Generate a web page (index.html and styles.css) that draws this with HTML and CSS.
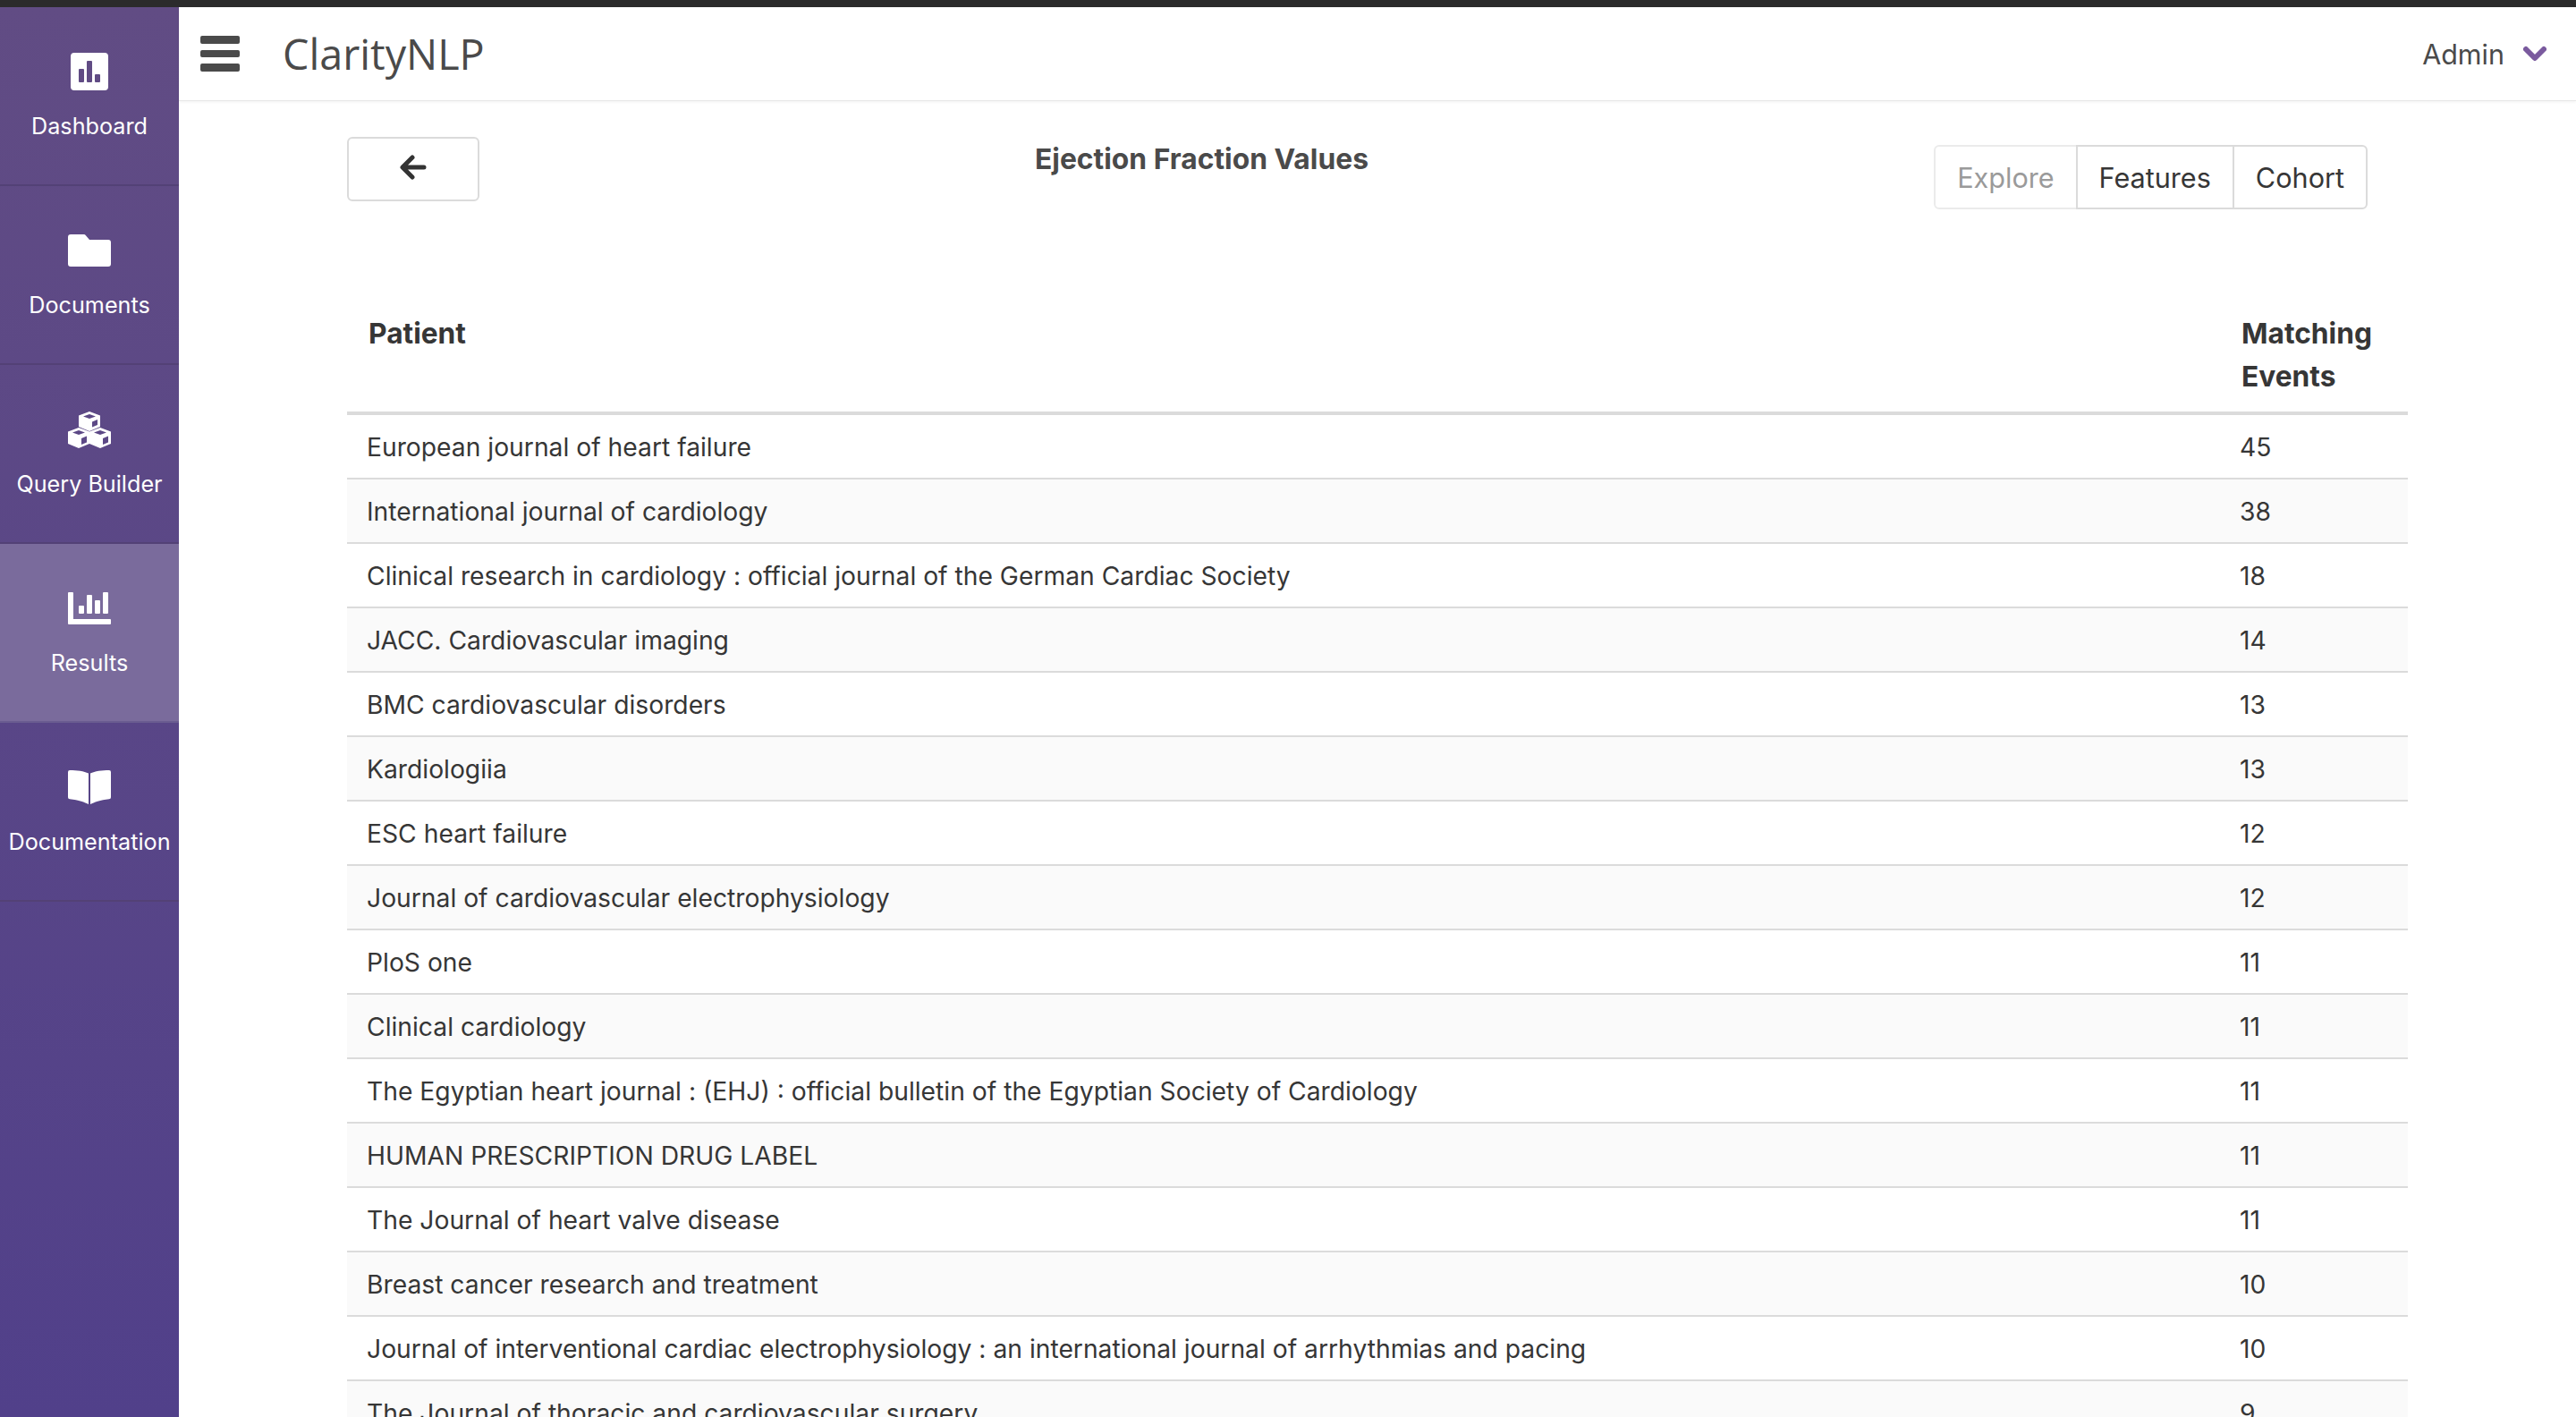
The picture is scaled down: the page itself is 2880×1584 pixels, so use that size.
FILE: index.html
```html
<!DOCTYPE html>
<html lang="en">
<head>
  <meta charset="UTF-8">
  <title>ClarityNLP</title>
  <link rel="stylesheet" href="styles.css">
</head>
<body>
  <div class="app">
    <!-- Sidebar -->
    <nav class="sidebar">
      <a class="nav-item">
        <div class="nav-icon">
          <svg width="42" height="42" viewBox="0 0 42 42"><path fill="#fff" fill-rule="evenodd" d="M4 0h34a4 4 0 0 1 4 4v34a4 4 0 0 1-4 4H4a4 4 0 0 1-4-4V4a4 4 0 0 1 4-4zM10 18a1 1 0 0 0-1 1v13a1 1 0 0 0 1 1h4a1 1 0 0 0 1-1V19a1 1 0 0 0-1-1zM19 9a1 1 0 0 0-1 1v22a1 1 0 0 0 1 1h4a1 1 0 0 0 1-1V10a1 1 0 0 0-1-1zM28 24a1 1 0 0 0-1 1v7a1 1 0 0 0 1 1h4a1 1 0 0 0 1-1v-7a1 1 0 0 0-1-1z"/></svg>
        </div>
        <span>Dashboard</span>
      </a>
      <a class="nav-item">
        <div class="nav-icon">
          <svg width="48" height="36" viewBox="0 0 48 36"><path fill="#fff" d="M3 0h15a2 2 0 0 1 1.500.7L24 6h21a3 3 0 0 1 3 3v24a3 3 0 0 1-3 3H3a3 3 0 0 1-3-3V3a3 3 0 0 1 3-3z"/></svg>
        </div>
        <span>Documents</span>
      </a>
      <a class="nav-item">
        <div class="nav-icon">
          <svg width="48" height="41" viewBox="0 0 48 41"><path fill="#fff" fill-rule="evenodd" d="M24 0l12 4.500V17l-12 5-12-5V4.500zM24 3L17 5.500l7 2.500 7-2.500zM27 11.500v6l6-2.500V9zM12 18L24 22.500V36l-12 5L0 36V22.500zM12 21L5 23.500l7 2.500 7-2.500zM15 30v7l6-2.500V27.500zM36 18l12 4.500V36l-12 5-12-5V22.500zM36 21l-7 2.500 7 2.500 7-2.500zM39 30v7l6-2.500V27.500z"/></svg>
        </div>
        <span>Query Builder</span>
      </a>
      <a class="nav-item active">
        <div class="nav-icon">
          <svg width="48" height="36" viewBox="0 0 48 36"><path fill="#fff" d="M1 0h4a1 1 0 0 1 1 1v29h41a1 1 0 0 1 1 1v4a1 1 0 0 1-1 1H1a1 1 0 0 1-1-1V1a1 1 0 0 1 1-1zM13 15h4a1 1 0 0 1 1 1v7a1 1 0 0 1-1 1h-4a1 1 0 0 1-1-1v-7a1 1 0 0 1 1-1zM22 3h4a1 1 0 0 1 1 1v19a1 1 0 0 1-1 1h-4a1 1 0 0 1-1-1V4a1 1 0 0 1 1-1zM31 9h4a1 1 0 0 1 1 1v13a1 1 0 0 1-1 1h-4a1 1 0 0 1-1-1V10a1 1 0 0 1 1-1zM40 0h4a1 1 0 0 1 1 1v22a1 1 0 0 1-1 1h-4a1 1 0 0 1-1-1V1a1 1 0 0 1 1-1z"/></svg>
        </div>
        <span>Results</span>
      </a>
      <a class="nav-item">
        <div class="nav-icon">
          <svg width="48" height="38" viewBox="0 0 48 38"><path fill="#fff" d="M23 3.500V38c-4-2-11-5-21-5.800a2 2 0 0 1-2-2V2a2 2 0 0 1 2-2c8 0 16 1 21 3.500zM25 3.500V38c4-2 11-5 21-5.800a2 2 0 0 0 2-2V2a2 2 0 0 0-2-2c-8 0-16 1-21 3.500z"/></svg>
        </div>
        <span>Documentation</span>
      </a>
    </nav>

    <div class="main">
      <!-- Header -->
      <header class="topbar">
        <svg class="burger" width="44" height="40" viewBox="0 0 44 40"><path fill="#4a4a4a" d="M2 0h40a2 2 0 0 1 2 2v5a2 2 0 0 1-2 2H2a2 2 0 0 1-2-2V2a2 2 0 0 1 2-2zM2 16h40a2 2 0 0 1 2 2v4a2 2 0 0 1-2 2H2a2 2 0 0 1-2-2v-4a2 2 0 0 1 2-2zM2 31h40a2 2 0 0 1 2 2v5a2 2 0 0 1-2 2H2a2 2 0 0 1-2-2v-5a2 2 0 0 1 2-2z"/></svg>
        <span class="brand">ClarityNLP</span>
        <span class="user">Admin</span>
        <svg class="chevron" width="26" height="18" viewBox="0 0 26 18"><path fill="none" stroke="#7a5a9e" stroke-width="6" stroke-linecap="round" stroke-linejoin="round" d="M3 4l10 10L23 4"/></svg>
      </header>

      <!-- Contenu -->
      <section class="content">
        <div class="toolbar">
          <button class="back">
            <svg width="30" height="28" viewBox="0 0 30 28"><path fill="none" stroke="#333" stroke-width="5" stroke-linecap="round" stroke-linejoin="round" d="M27 14H4M14 3L3 14l11 11"/></svg>
          </button>
          <h1 class="title">Ejection Fraction Values</h1>
          <div class="btn-group">
            <button class="disabled">Explore</button>
            <button>Features</button>
            <button>Cohort</button>
          </div>
        </div>

        <table class="results">
          <thead>
            <tr><th>Patient</th><th class="count">Matching Events</th></tr>
          </thead>
          <tbody>
            <tr><td>European journal of heart failure</td><td>45</td></tr>
            <tr><td>International journal of cardiology</td><td>38</td></tr>
            <tr><td>Clinical research in cardiology : official journal of the German Cardiac Society</td><td>18</td></tr>
            <tr><td>JACC. Cardiovascular imaging</td><td>14</td></tr>
            <tr><td>BMC cardiovascular disorders</td><td>13</td></tr>
            <tr><td>Kardiologiia</td><td>13</td></tr>
            <tr><td>ESC heart failure</td><td>12</td></tr>
            <tr><td>Journal of cardiovascular electrophysiology</td><td>12</td></tr>
            <tr><td>PloS one</td><td>11</td></tr>
            <tr><td>Clinical cardiology</td><td>11</td></tr>
            <tr><td>The Egyptian heart journal : (EHJ) : official bulletin of the Egyptian Society of Cardiology</td><td>11</td></tr>
            <tr><td>HUMAN PRESCRIPTION DRUG LABEL</td><td>11</td></tr>
            <tr><td>The Journal of heart valve disease</td><td>11</td></tr>
            <tr><td>Breast cancer research and treatment</td><td>10</td></tr>
            <tr><td>Journal of interventional cardiac electrophysiology : an international journal of arrhythmias and pacing</td><td>10</td></tr>
            <tr><td>The Journal of thoracic and cardiovascular surgery</td><td>9</td></tr>
          </tbody>
        </table>
      </section>
    </div>
  </div>
</body>
</html>
```

FILE: styles.css
```css
html, body {
  margin: 0;
  height: 100%;
  overflow: hidden;
}

body {
  font-family: Inter, sans-serif;
  color: #363636;
  background-color: #fff;
  border-top: 8px solid #2b2b2b;
  box-sizing: border-box;
}

.app {
  display: flex;
  height: 100%;
}

/* Sidebar */
.sidebar {
  width: 200px;
  flex-shrink: 0;
  background: linear-gradient(180deg, #614c84 0%, #51408a 100%);
}

.nav-item {
  height: 200px;
  box-sizing: border-box;
  padding-top: 50px;
  display: flex;
  flex-direction: column;
  align-items: center;
  color: #fff;
  font-size: 25.2px;
  border-bottom: 2px solid #534176;
}

.nav-item span {
  margin-top: 22px;
  line-height: 34px;
  white-space: nowrap;
}

.nav-icon {
  height: 44px;
  display: flex;
  align-items: center;
}

.nav-item.active {
  background-color: #7a6b9c;
  border-bottom-color: #6a5c90;
}

/* Header */
.main {
  flex: 1;
  min-width: 0;
}

.topbar {
  height: 104px;
  display: flex;
  align-items: center;
  border-bottom: 1px solid #e8e8e8;
  box-shadow: 0 1px 3px rgba(0, 0, 0, 0.06);
  padding-left: 24px;
}

.burger {
  margin-right: 48px;
}

.brand {
  font-family: "Open Sans", sans-serif;
  font-size: 46.7px;
  color: #4a4a4a;
}

.user {
  margin-left: auto;
  font-size: 30.5px;
  color: #4a4a4a;
}

.chevron {
  margin: 0 33px 0 21px;
}

/* Contenu */
.content {
  padding: 0 188px;
}

.toolbar {
  display: flex;
  align-items: flex-start;
  height: 212px;
  padding-top: 40px;
  box-sizing: border-box;
}

button {
  font-family: inherit;
  font-size: 30.6px;
  color: #363636;
  background: #fff;
  border: 2px solid #dbdbdb;
  cursor: pointer;
}

.back {
  width: 148px;
  height: 72px;
  border-radius: 6px;
}

.title {
  margin: 1px 0 0 621px;
  font-size: 31.8px;
  line-height: 48px;
  font-weight: 700;
  color: #4a4a4a;
  white-space: nowrap;
}

.btn-group {
  display: flex;
  margin-left: auto;
  margin-right: 45px;
  margin-top: 9px;
}

.btn-group button {
  height: 72px;
  padding: 0 24px;
  margin-left: -2px;
}

.btn-group button:first-child {
  border-radius: 6px 0 0 6px;
  margin-left: 0;
}

.btn-group button:last-child {
  border-radius: 0 6px 6px 0;
}

.btn-group .disabled {
  color: #9a9a9a;
  border-color: #ebebeb;
}

.results {
  width: 100%;
  border-collapse: collapse;
  font-size: 28.25px;
}

.results th {
  text-align: left;
  vertical-align: top;
  font-size: 31.7px;
  font-weight: 700;
  padding: 24px 24px 15px;
  line-height: 48px;
  border-bottom: 4px solid #dbdbdb;
}

.results th.count {
  width: 162px;
}

.results td {
  height: 68px;
  padding: 2px 22px 0;
  line-height: 44px;
  border-bottom: 2px solid #dbdbdb;
}

.results tbody tr:nth-child(even) {
  background-color: #fafafa;
}
```
